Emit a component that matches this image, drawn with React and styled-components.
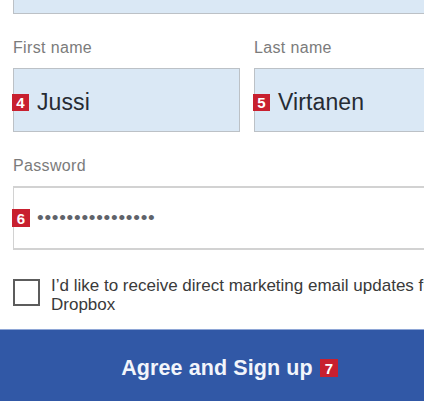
import React from "react";
import styled, { createGlobalStyle } from "styled-components";

const Global = createGlobalStyle`
  html, body { margin: 0; padding: 0; background: #ffffff; }
  body { width: 424px; height: 401px; overflow: hidden; font-family: "Liberation Sans", Arial, sans-serif; }
`;

const Page = styled.div`
  width: 459px;
  display: flex;
  flex-direction: column;
`;

const Form = styled.div`
  display: flex;
  flex-direction: column;
  gap: 24px;
  padding: 0 13px;
  margin-top: -50px;
`;

const Row = styled.div`
  display: grid;
  grid-template-columns: 227px 227px;
  column-gap: 14px;
`;

const Group = styled.div`
  display: flex;
  flex-direction: column;
`;

const Label = styled.div`
  font-size: 16px;
  line-height: 20px;
  color: #7b7b7b;
  letter-spacing: 0.35px;
  margin-bottom: 10px;
`;

const InputBox = styled.div`
  position: relative;
  box-sizing: border-box;
  height: 64px;
  display: flex;
  align-items: center;
  padding-left: 23px;
  background: ${(p) => (p.$filled ? "#dae8f5" : "#ffffff")};
  border: 1px solid ${(p) => (p.$filled ? "#bcc1c6" : "#d2d2d2")};
  border-top-width: ${(p) => (p.$filled ? "1px" : "2px")};
  border-bottom-width: ${(p) => (p.$filled ? "1px" : "2px")};
`;

const Value = styled.span`
  font-size: 23px;
  color: #262b33;
  letter-spacing: 0.1px;
  margin-top: 4px;
`;

const Dots = styled.span`
  font-size: 19px;
  color: #5f636a;
  letter-spacing: 0.75px;
  margin-left: 0px;
  margin-top: -1px;
`;

const Badge = styled.span`
  display: inline-flex;
  align-items: center;
  justify-content: center;
  width: ${(p) => p.$size || 17}px;
  height: ${(p) => p.$size || 17}px;
  background: #c8202f;
  color: #ffffff;
  font-family: "Liberation Sans", Arial, sans-serif;
  font-weight: 700;
  font-size: 15px;
  line-height: 1;
`;

const FieldBadge = styled(Badge)`
  position: absolute;
  left: -2px;
  top: ${(p) => p.$top}px;
`;

const CheckRow = styled.div`
  display: flex;
  align-items: flex-start;
  gap: 11px;
  margin-top: 2px;
  width: 440px;
`;

const Box = styled.div`
  flex: none;
  box-sizing: border-box;
  width: 27px;
  height: 27px;
  border: 2px solid #5c5c5c;
  margin-top: 3px;
  background: #fff;
`;

const CheckText = styled.div`
  font-size: 17px;
  line-height: 19px;
  color: #3a3a3a;
  width: 410px;
`;

const Button = styled.div`
  margin-top: 15px;
  height: 76px;
  background: #3158a6;
  border-top: 1px solid #8ea6d6;
  display: flex;
  align-items: center;
  justify-content: center;
  gap: 7px;
`;

const ButtonText = styled.span`
  color: #f2f5fb;
  font-weight: 700;
  font-size: 21.5px;
  letter-spacing: 0.1px;
`;

export default function App() {
  return (
    <>
      <Global />
      <Page>
        <Form>
          <InputBox $filled />
          <Row>
            <Group>
              <Label>First name</Label>
              <InputBox $filled>
                <FieldBadge $top={25}>4</FieldBadge>
                <Value>Jussi</Value>
              </InputBox>
            </Group>
            <Group>
              <Label>Last name</Label>
              <InputBox $filled>
                <FieldBadge $top={25}>5</FieldBadge>
                <Value>Virtanen</Value>
              </InputBox>
            </Group>
          </Row>
          <Group>
            <Label>Password</Label>
            <InputBox>
              <FieldBadge $top={21} $size={18}>6</FieldBadge>
              <Dots>••••••••••••••••</Dots>
            </InputBox>
          </Group>
          <CheckRow>
            <Box />
            <CheckText>I’d like to receive direct marketing email updates from Dropbox</CheckText>
          </CheckRow>
        </Form>
        <Button>
          <ButtonText>Agree and Sign up</ButtonText>
          <Badge $size={18}>7</Badge>
        </Button>
      </Page>
    </>
  );
}
